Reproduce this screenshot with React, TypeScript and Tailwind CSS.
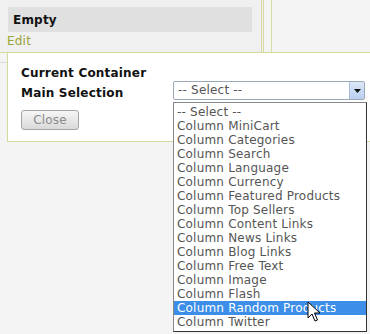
import React from "react";

const options = [
  "-- Select --",
  "Column MiniCart",
  "Column Categories",
  "Column Search",
  "Column Language",
  "Column Currency",
  "Column Featured Products",
  "Column Top Sellers",
  "Column Content Links",
  "Column News Links",
  "Column Blog Links",
  "Column Free Text",
  "Column Image",
  "Column Flash",
  "Column Random Products",
  "Column Twitter",
];

const selectedIndex = 14;

export default function App() {
  return (
    <div className="relative w-[370px] h-[334px] overflow-hidden bg-[#f4f4f4] font-['DejaVu_Sans',sans-serif] text-[12px] tracking-[0.2px]">
      {/* Background panels behind the popup */}
      <div className="flex h-[53px]">
        <div className="w-[264px] shrink-0 bg-[#f0f0f0] border-r-[3px] border-double border-b border-[#d9dca2] pl-[8px] pr-[9px] pt-[7px]">
          <div className="h-[25px] bg-[#e0e0e0] flex items-center pl-[5px] font-bold text-[#111]">
            Empty
          </div>
          <div className="-ml-[1px] mt-[2px] leading-[14px] text-[#9aa438]">Edit</div>
        </div>
        <div className="w-[7px] shrink-0 bg-[#f4f4f4] border-b border-[#d9dca2]" />
        <div className="flex-1 border-l border-b border-[#d9dca2] bg-[#f4f4f4]" />
      </div>
      <div className="w-[8px] h-[10px] border-b border-[#dcdcdc]" />

      {/* Popup dialog */}
      <div className="absolute left-[7px] top-[52px] w-[380px] h-[90px] bg-white border border-[#d6d99c] pl-[13px] pt-[12px]">
        <div className="font-bold text-[#111] leading-[16px] h-[20px]">Current Container</div>
        <div className="flex items-start">
          <div className="w-[152px] shrink-0 font-bold text-[#111] leading-[16px]">
            Main Selection
          </div>
          <div className="-mt-[4px] w-[192px] h-[19px] flex border border-[#9aa7b5] rounded-[2px] bg-white">
            <div className="flex-1 pl-[4px] leading-[17px] text-[#555]">-- Select --</div>
            <div className="w-[15px] h-[17px] bg-gradient-to-b from-[#dbe7f8] to-[#b9cff0] border-l border-[#a9bcd8] flex items-center justify-center">
              <svg width="7" height="4" viewBox="0 0 7 4">
                <path d="M0 0 H7 L3.5 4 Z" fill="#111" />
              </svg>
            </div>
          </div>
        </div>
        <button className="mt-[9px] w-[58px] h-[20px] rounded-[3px] border border-[#a4a4a4] bg-gradient-to-b from-[#f6f6f6] to-[#d9d9d9] text-[#8a8a8a] leading-[18px] text-[12px] tracking-[0.2px]">
          Close
        </button>
      </div>

      {/* Open dropdown list */}
      <div className="absolute left-[173px] top-[102px] w-[194px] border border-[#888] border-r-[#333] border-b-[#333] bg-white py-[2px]">
        {options.map((o, i) => (
          <div
            key={o}
            className={
              i === selectedIndex
                ? "h-[14px] leading-[14px] pl-[3px] bg-[#3c8ee8] text-white"
                : "h-[14px] leading-[14px] pl-[3px] text-[#555]"
            }
          >
            {o}
          </div>
        ))}
      </div>

      {/* Mouse cursor */}
      <svg
        className="absolute left-[307px] top-[301px]"
        width="14"
        height="22"
        viewBox="0 0 14 22"
      >
        <path
          d="M1 1 L1 17 L5 13 L8 20 L10.5 19 L7.5 12 L13 12 Z"
          fill="#fff"
          stroke="#000"
          strokeWidth="1"
          strokeLinejoin="miter"
        />
      </svg>
    </div>
  );
}
